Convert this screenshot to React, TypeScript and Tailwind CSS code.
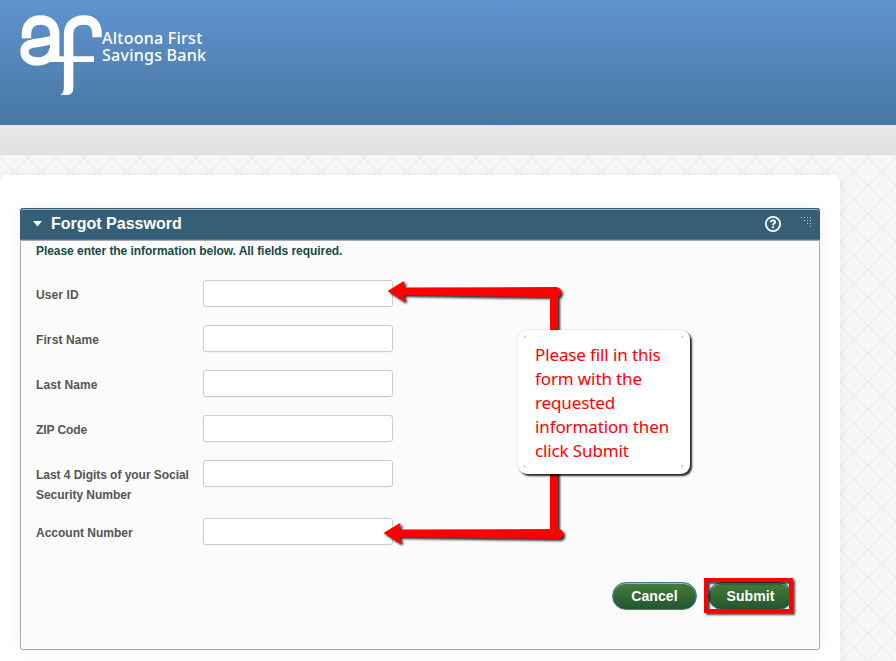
/* ─── Data ────────────────────────────────────────────── */
interface Field {
  id: string
  label: string
  className: string
}

const fields: Field[] = [
  { id: 'userId', label: 'User ID', className: 'h-[45px] tracking-[0.1px]' },
  { id: 'firstName', label: 'First Name', className: 'h-[45px] tracking-[0.1px]' },
  { id: 'lastName', label: 'Last Name', className: 'h-[45px] tracking-[0.1px]' },
  { id: 'zip', label: 'ZIP Code', className: 'h-[45px] tracking-[-0.1px]' },
  { id: 'ssn', label: 'Last 4 Digits of your Social Security Number', className: 'h-[58px] tracking-[-0.04px]' },
  { id: 'account', label: 'Account Number', className: 'h-[45px]' },
]

/* ─── Logo ────────────────────────────────────────────── */
function LogoMark() {
  return (
    <svg width="84" height="84" viewBox="0 0 84 84" className="shrink-0" fill="none" stroke="#fff">
      <path d="M7.5 24.500V20C7.500 11 13 6 21.500 6C30 6 35.700 11 35.700 20V46" strokeWidth="9.4" />
      <path d="M35.700 25C29 27.500 22 28.500 14 29.500C8 30.500 5.500 33 5.500 38C5.500 44 12 47.500 18 47.500C27 47.500 34.500 42 34.500 34" strokeWidth="8.4" />
      <path d="M3 25.200C8 25.400 11 25 15 24.300" stroke="#588bc3" strokeWidth="0.9" />
      <path d="M31 45.200H75" strokeWidth="5.7" />
      <path d="M78 23.300V19C78 10 73 6 65 6C56 6 49.600 11 49.600 20V72" strokeWidth="9.4" />
      <path d="M44.900 70H54.300V74Q54.300 81 48 81H41.500Q44.900 79 44.900 73Z" fill="#fff" stroke="none" />
    </svg>
  )
}

function Header() {
  return (
    <header className="flex h-[125px] bg-linear-to-b from-[#6094d0] to-[#4877a1] pt-[14px] pl-[19px] text-white">
      <LogoMark />
      <div className="-ml-px pt-[16px] font-['Noto_Sans',sans-serif] text-[16px] leading-[17px] font-medium tracking-[0.25px] whitespace-nowrap">
        <div>Altoona First</div>
        <div>Savings Bank</div>
      </div>
    </header>
  )
}

/* ─── Panel ───────────────────────────────────────────── */
function PanelTitle() {
  return (
    <div className="-mx-px -mt-px flex h-8 items-center rounded-t-[3px] border border-[#365f77] border-b-[#4877a1] bg-[#365f77] pl-3 text-white shadow-[inset_0_1px_0_#a3b7c2,0_1px_0_#aaaaaa]">
      <svg width="9" height="6" viewBox="0 0 9 6">
        <path d="M0 0H9L4.5 5.5Z" fill="#fff" />
      </svg>
      <h1 className="ml-[9px] flex-1 text-[16px] leading-5 font-bold">Forgot Password</h1>
      <svg width="18" height="18" viewBox="0 0 18 18" className="mr-[19px]">
        <circle cx="9" cy="9" r="7.1" fill="none" stroke="#fff" strokeWidth="1.8" />
        <path d="M6.8 7.2C6.8 4.7 11.1 4.8 11.1 7.1C11.1 8.6 9 8.5 9 10.3" fill="none" stroke="#fff" strokeWidth="1.9" />
        <rect x="8" y="11.3" width="2" height="1.8" fill="#fff" />
      </svg>
      <svg width="11" height="10" viewBox="0 0 11 10" className="mr-[7px] mb-1" fill="#b5c5ce">
        <path d="M0 0h1v1H0zM3 0h1v1H3zM6 0h1v1H6zM9 0h1v1H9zM3 3h1v1H3zM6 3h1v1H6zM9 3h1v1H9zM6 6h1v1H6zM9 6h1v1H9zM9 9h1v1H9z" />
      </svg>
    </div>
  )
}

function FieldRow({ field }: { field: Field }) {
  return (
    <div className={`flex items-start ${field.className}`}>
      <label htmlFor={field.id} className="w-[167px] pt-[5px] pr-2 text-[12px] leading-5 font-bold text-[#555]">
        {field.label}
      </label>
      <input
        id={field.id}
        className="h-[27px] w-[190px] rounded-[3px] border border-[#ccc] bg-white px-2 text-[12px] shadow-[0_1px_2px_rgba(0,0,0,0.04)] outline-none"
      />
    </div>
  )
}

const buttonClass =
  'h-7 rounded-full border border-[#4877a1] bg-linear-to-b from-[#467d3b] to-[#22562f] text-[14px] font-bold tracking-[0.1px] text-white shadow-[inset_0_1px_0_#9db69c]'

/* ─── Annotations ─────────────────────────────────────── */
function Arrows() {
  return (
    <svg
      width="190"
      height="280"
      viewBox="380 275 190 280"
      className="absolute top-[66px] left-[359px] drop-shadow-[2px_2px_1px_rgba(0,0,0,0.8)]"
      fill="#f00"
    >
      <path d="M550 292h8v243h-8z" />
      <path d="M387.500 291L403 281.500Q405 281 404.500 283L403.500 287.500L556 287Q561 287.500 561 292Q561 297 556 297.300L404 295L405 300Q405 302 403 301Z" />
      <path d="M383.500 533L399 523.500Q401 523 400.500 525L399.500 529.500L557 529Q563 529 563.500 534Q563 539 558 539L400 537L401 542Q401 544 399 543Z" />
    </svg>
  )
}

function Callout() {
  return (
    <div className="absolute top-[121px] left-[497px] h-[144px] w-[172px] rounded-[9px] bg-white pt-[13px] pl-[17px] font-['Noto_Sans',sans-serif] text-[17px] leading-6 tracking-[-0.12px] whitespace-nowrap text-[#f00] shadow-[2px_2px_2px_rgba(0,0,0,0.85),0_0_2px_rgba(0,0,0,0.2)]">
      <div>Please fill in this</div>
      <div>form with the</div>
      <div>requested</div>
      <div>information then</div>
      <div>click Submit</div>
      <svg width="162" height="134" className="absolute top-[5px] left-[5px]" fill="none" stroke="#bbb">
        <path d="M1 3Q1 1 3 1M158 1Q160 1 160 3M1 130Q1 132 3 132M158 132Q160 132 160 130" />
      </svg>
    </div>
  )
}

export default function App() {
  return (
    <div className="relative h-[661px] w-[896px] overflow-hidden bg-[#f6f6f6] font-['Liberation_Sans',sans-serif]">
      <Header />
      <div className="h-[30px] bg-linear-to-b from-[#e7e9e8] to-[#dfe1e0]" />
      <div className="h-[506px] bg-[repeating-linear-gradient(45deg,transparent_0_18.8px,#eeeeee_18.8px_19.8px),repeating-linear-gradient(-45deg,transparent_0_18.8px,#eeeeee_18.8px_19.8px)] pt-5">
        <main className="h-[500px] w-[840px] rounded-[6px] bg-white pt-[33px] pl-5 shadow-[0_0_8px_rgba(0,0,0,0.06)]">
          <section className="relative h-[442px] w-[800px] rounded-[3px] border border-[#aaa] bg-[#fbfbfb] shadow-[0_0_16px_rgba(0,0,0,0.06)]">
            <PanelTitle />
            <p className="pt-px pl-[15px] text-[12px] leading-5 font-bold tracking-[-0.05px] text-[#174b43]">
              Please enter the information below. All fields required.
            </p>
            <form className="mt-[19px] pl-[15px]">
              {fields.map((field) => (
                <FieldRow key={field.id} field={field} />
              ))}
              <div className="mt-[19px] flex gap-[11px] pl-[576px]">
                <button type="button" className={`${buttonClass} w-[85px]`}>Cancel</button>
                <button type="button" className={`${buttonClass} w-[85px]`}>Submit</button>
              </div>
            </form>
            <Arrows />
            <Callout />
            <div className="absolute top-[369px] left-[683px] h-[35px] w-[89px] border-4 border-[#f00] shadow-[2px_2px_2px_rgba(0,0,0,0.7),inset_2px_2px_2px_rgba(0,0,0,0.7)]" />
          </section>
        </main>
      </div>
    </div>
  )
}
